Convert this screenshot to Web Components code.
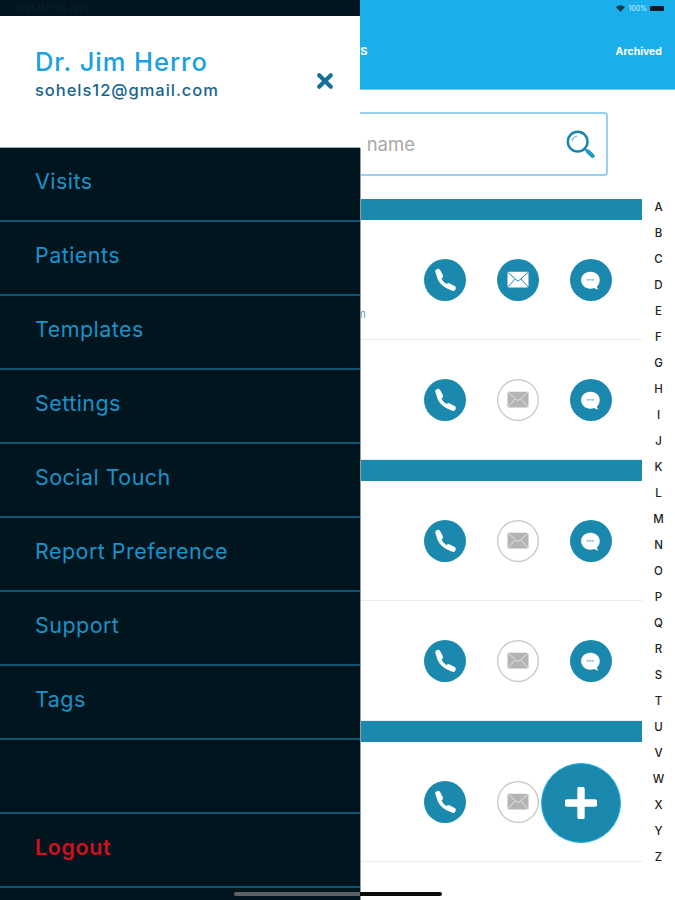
<!DOCTYPE html>
<html lang="en">
<head>
<meta charset="utf-8">
<title>Patients</title>
<style>
  html, body { margin: 0; padding: 0; background: #fff; }
  body { width: 675px; height: 900px; overflow: hidden; font-family: Inter, "Liberation Sans", sans-serif; }
</style>
</head>
<body>
<app-shell>
  <top-bar title-text="PATIENTS" action="Archived"></top-bar>
  <search-box placeholder="Search by name"></search-box>
  <contact-list>
    <section-band></section-band>
    <contact-row email detail="sohels12@gmail.com"></contact-row>
    <contact-row></contact-row>
    <section-band></section-band>
    <contact-row></contact-row>
    <contact-row></contact-row>
    <section-band></section-band>
    <contact-row no-chat></contact-row>
  </contact-list>
  <alpha-index slot="index"></alpha-index>
  <add-fab slot="overlay"></add-fab>
  <side-drawer slot="overlay" name="Dr. Jim Herro" email="sohels12@gmail.com">
    <drawer-item>Visits</drawer-item>
    <drawer-item>Patients</drawer-item>
    <drawer-item>Templates</drawer-item>
    <drawer-item>Settings</drawer-item>
    <drawer-item>Social Touch</drawer-item>
    <drawer-item>Report Preference</drawer-item>
    <drawer-item>Support</drawer-item>
    <drawer-item>Tags</drawer-item>
    <drawer-item blank></drawer-item>
    <drawer-item danger>Logout</drawer-item>
  </side-drawer>
  <home-bar slot="overlay"></home-bar>
</app-shell>
<script>
const shadow = (el, html) => { el.attachShadow({ mode: 'open' }).innerHTML = html; };

customElements.define('app-shell', class extends HTMLElement {
  connectedCallback() { if (this.shadowRoot) return; shadow(this, `
    <style>
      :host { display: block; position: relative; width: 675px; height: 900px; overflow: hidden; background: #fff; }
    </style>
    <slot></slot>
    <slot name="index"></slot>
    <slot name="overlay"></slot>`); }
});

customElements.define('top-bar', class extends HTMLElement {
  connectedCallback() { if (this.shadowRoot) return; shadow(this, `
    <style>
      :host { display: flex; flex-direction: column; height: 90px; background: #1aaeea; color: #fff; box-sizing: border-box; border-bottom: 1px solid #7accee; }
      .status { height: 16px; display: flex; justify-content: flex-end; align-items: center; gap: 3px; padding-right: 11px; font-size: 7px; color: #d6f0fb; }
      .wifi { width: 9px; height: 7px; }
      .batt { width: 14px; height: 5px; background: #0a1a22; border-radius: 1px; }
      .title { flex: 1; display: flex; align-items: center; justify-content: space-between; padding: 0 13px 3px 0; font: 700 10.5px Inter, "Liberation Sans", sans-serif; }
      .t { margin-left: 300px; font-size: 11px; width: 67.5px; text-align: right; white-space: nowrap; }
    </style>
    <div class="status">
      <svg class="wifi" viewBox="0 0 12 9"><path d="M0 2.5 Q6 -2 12 2.5 L6 9 Z" fill="#0d3a50"/></svg>
      <span>100%</span><span class="batt"></span>
    </div>
    <div class="title"><span class="t">${this.getAttribute('title-text')}</span><span>${this.getAttribute('action')}</span></div>`); }
});

customElements.define('search-box', class extends HTMLElement {
  connectedCallback() { if (this.shadowRoot) return; shadow(this, `
    <style>
      :host { display: block; height: 109px; box-sizing: border-box; padding: 22px 67px 23px 40px; }
      .box { height: 100%; box-sizing: border-box; border: 2px solid #97d0f0; border-radius: 4px; display: flex; align-items: center; justify-content: flex-end; padding-right: 11.5px; color: #a8a8a8; font: 400 18.5px Inter, "Liberation Sans", sans-serif; }
      span { flex: 1; text-align: right; padding-right: 149.5px; white-space: nowrap; word-spacing: 4px; }
      svg { width: 30px; height: 30px; flex: none; }
    </style>
    <div class="box"><span>${this.getAttribute('placeholder')}</span>
      <svg viewBox="0 0 32 32" fill="none">
        <circle cx="13.5" cy="13.5" r="10.5" stroke="#1a86ad" stroke-width="2.6"/>
        <path d="M7.5 13 Q8.5 8.5 13 7.5" stroke="#8ac4da" stroke-width="1.6"/>
        <path d="M21.5 21.5 L23.5 23.5" stroke="#1a86ad" stroke-width="2.2"/>
        <path d="M24.5 24 L29.5 28.7" stroke="#1f9ac6" stroke-width="4.4" stroke-linecap="round"/>
      </svg>
    </div>`); }
});

customElements.define('contact-list', class extends HTMLElement {
  connectedCallback() { if (this.shadowRoot) return; shadow(this, `
    <style>:host { display: flex; flex-direction: column; width: 642px; }</style><slot></slot>`); }
});

customElements.define('section-band', class extends HTMLElement {
  connectedCallback() { if (this.shadowRoot) return; shadow(this, `
    <style>:host { display: block; height: 21px; background: #1b89ae; flex: none; }</style>`); }
});

const ICONS = {
  phone: `<svg viewBox="0 0 42 42" fill="none" stroke="#fff" stroke-linecap="round">
      <path d="M14 14.5 C14.5 21 20 27.5 27 29" stroke-width="3.4"/>
      <path d="M14 12.6 L16.2 17" stroke-width="5.4"/>
      <path d="M24.5 26.8 L29 29.2" stroke-width="5.4"/></svg>`,
  mail: `<svg viewBox="0 0 42 42"><rect x="10.5" y="12.7" width="21" height="15.8" rx="1.4" fill="#fff"/>
      <path d="M11 13.5 L21 22.3 L31 13.5 M11 27.8 L18 20 M31 27.8 L24 20" fill="none" stroke="#1b89ae" stroke-width="1"/></svg>`,
  mailOff: `<svg viewBox="0 0 42 42"><rect x="10.5" y="12.7" width="21" height="15.8" rx="1" fill="#b4b4b4"/>
      <path d="M11 13.2 L21 21.8 L31 13.2 M11 28 L18 20 M31 28 L24 20" fill="none" stroke="#e6e6e6" stroke-width=".9"/></svg>`,
  chat: `<svg viewBox="0 0 42 42"><g transform="translate(.9 2) scale(.93)"><path d="M21 11.5 C27 11.5 31 15.5 31 20.5 C31 23.6 29.8 25.8 28 27.3 C28.2 28.6 28.9 29.8 29.8 30.6 C27.8 30.6 26.2 30 25 29.1 C23.8 29.6 22.4 29.8 21 29.8 C15 29.8 11 25.6 11 20.5 C11 15.5 15 11.5 21 11.5 Z" fill="#fff"/>
      <path d="M17 20.3 H25" stroke="#5ea9c4" stroke-width="1.5" stroke-dasharray="2.2 .6"/></g></svg>`
};

customElements.define('action-icon', class extends HTMLElement {
  connectedCallback() { if (this.shadowRoot) return;
    const off = this.hasAttribute('off');
    shadow(this, `
    <style>
      :host { display: block; width: 42px; height: 42px; border-radius: 50%; box-sizing: border-box; flex: none; background: ${off ? '#fff' : '#1b89ae'}; position: relative; }
      :host([off]) { box-shadow: inset 0 0 0 1.3px #c6c6c6; }
      svg { display: block; width: 42px; height: 42px; }
    </style>${ICONS[this.getAttribute('icon')]}`); }
});

customElements.define('contact-row', class extends HTMLElement {
  connectedCallback() { if (this.shadowRoot) return;
    const d = this.getAttribute('detail');
    const mail = this.hasAttribute('email');
    shadow(this, `
    <style>
      :host { display: flex; height: 120px; flex: none; box-sizing: border-box; border-bottom: 1.5px solid #ececec; align-items: center; justify-content: flex-end; padding: 0 30px 0 0; gap: 31px; position: relative; }
      .d { position: absolute; right: 276px; top: 87px; font: 400 11px Inter, "Liberation Sans", sans-serif; color: #6b9dbd; white-space: nowrap; }
    </style>
    ${d ? `<span class="d">${d}</span>` : ''}
    <action-icon icon="phone"></action-icon>
    <action-icon icon="${mail ? 'mail' : 'mailOff'}" ${mail ? '' : 'off'}></action-icon>
    ${this.hasAttribute('no-chat') ? '<span style="width:42px"></span>' : '<action-icon icon="chat"></action-icon>'}`); }
});

customElements.define('alpha-index', class extends HTMLElement {
  connectedCallback() { if (this.shadowRoot) return;
    const letters = [...'ABCDEFGHIJKLMNOPQRSTUVWXYZ'].map(c => `<span>${c}</span>`).join('');
    shadow(this, `
    <style>
      :host { position: absolute; top: 194px; left: 642px; width: 33px; display: flex; flex-direction: column; align-items: center; font: 500 11.5px Inter, "Liberation Sans", sans-serif; color: #222; }
      span { display: block; height: 26px; line-height: 26px; }
    </style>${letters}`); }
});

customElements.define('add-fab', class extends HTMLElement {
  connectedCallback() { if (this.shadowRoot) return; shadow(this, `
    <style>
      :host { position: absolute; left: 541px; top: 763px; width: 80px; height: 80px; border-radius: 50%; box-sizing: border-box; background: #1b89ae; border: 1px solid #1fb1e6; display: flex; align-items: center; justify-content: center; }
      svg { width: 32px; height: 32px; }
    </style>
    <svg viewBox="0 0 32 32"><path d="M16 2.5 V29.5 M2.5 16 H29.5" stroke="#fff" stroke-width="7.4" stroke-linecap="round" fill="none"/></svg>`); }
});

customElements.define('side-drawer', class extends HTMLElement {
  connectedCallback() { if (this.shadowRoot) return; shadow(this, `
    <style>
      :host { position: absolute; left: 0; top: 0; bottom: 0; width: 360px; background: #01151f; display: flex; flex-direction: column; }
      :host::after { content: ""; position: absolute; left: 360px; top: 148px; bottom: 0; width: 1px; background: #9a9a9a; }
      .status { height: 16px; flex: none; font: 400 8px Inter, sans-serif; color: #0a2230; padding-left: 15px; line-height: 16px; }
      .head { height: 131.5px; flex: none; box-sizing: border-box; background: #fff; padding: 31px 26px 0 35px; border-bottom: 1.5px solid #8fb6cc; position: relative; }
      .name { font: 500 25.5px/30px Inter, sans-serif; color: #1a9fe0; letter-spacing: .95px; white-space: nowrap; }
      .mail { font: 500 16.5px/20px Inter, sans-serif; color: #16658c; letter-spacing: .97px; margin-top: 3px; white-space: nowrap; }
      .close { position: absolute; left: 316px; top: 56px; width: 18px; height: 18px; }
      .menu { display: flex; flex-direction: column; }
    </style>
    <div class="status">10:41 AM Thu Jan 9</div>
    <div class="head">
      <div class="name">${this.getAttribute('name')}</div>
      <div class="mail">${this.getAttribute('email')}</div>
      <svg class="close" viewBox="0 0 18 18"><path d="M3.2 3.2 L14.8 14.8 M14.8 3.2 L3.2 14.8" stroke="#14709a" stroke-width="4.2" stroke-linecap="round"/></svg>
    </div>
    <div class="menu"><slot></slot></div>`); }
});

customElements.define('drawer-item', class extends HTMLElement {
  connectedCallback() { if (this.shadowRoot) return; shadow(this, `
    <style>
      :host { display: flex; height: 74px; box-sizing: border-box; align-items: center; padding: 0 0 6px 35px; border-bottom: 2px solid #0f5470; color: #1b92c8; font: 400 21.5px Inter, sans-serif; letter-spacing: .45px; }
      :host([danger]) { color: #cf101d; font-weight: 600; letter-spacing: .6px; }
    </style><slot></slot>`); }
});

customElements.define('home-bar', class extends HTMLElement {
  connectedCallback() { if (this.shadowRoot) return; shadow(this, `
    <style>
      :host { position: absolute; left: 234px; top: 892px; width: 208px; height: 3.5px; border-radius: 2px; background: linear-gradient(90deg, #5f6264 0 126px, #0b0b0b 126px); }
    </style>`); }
});
</script>
</body>
</html>
